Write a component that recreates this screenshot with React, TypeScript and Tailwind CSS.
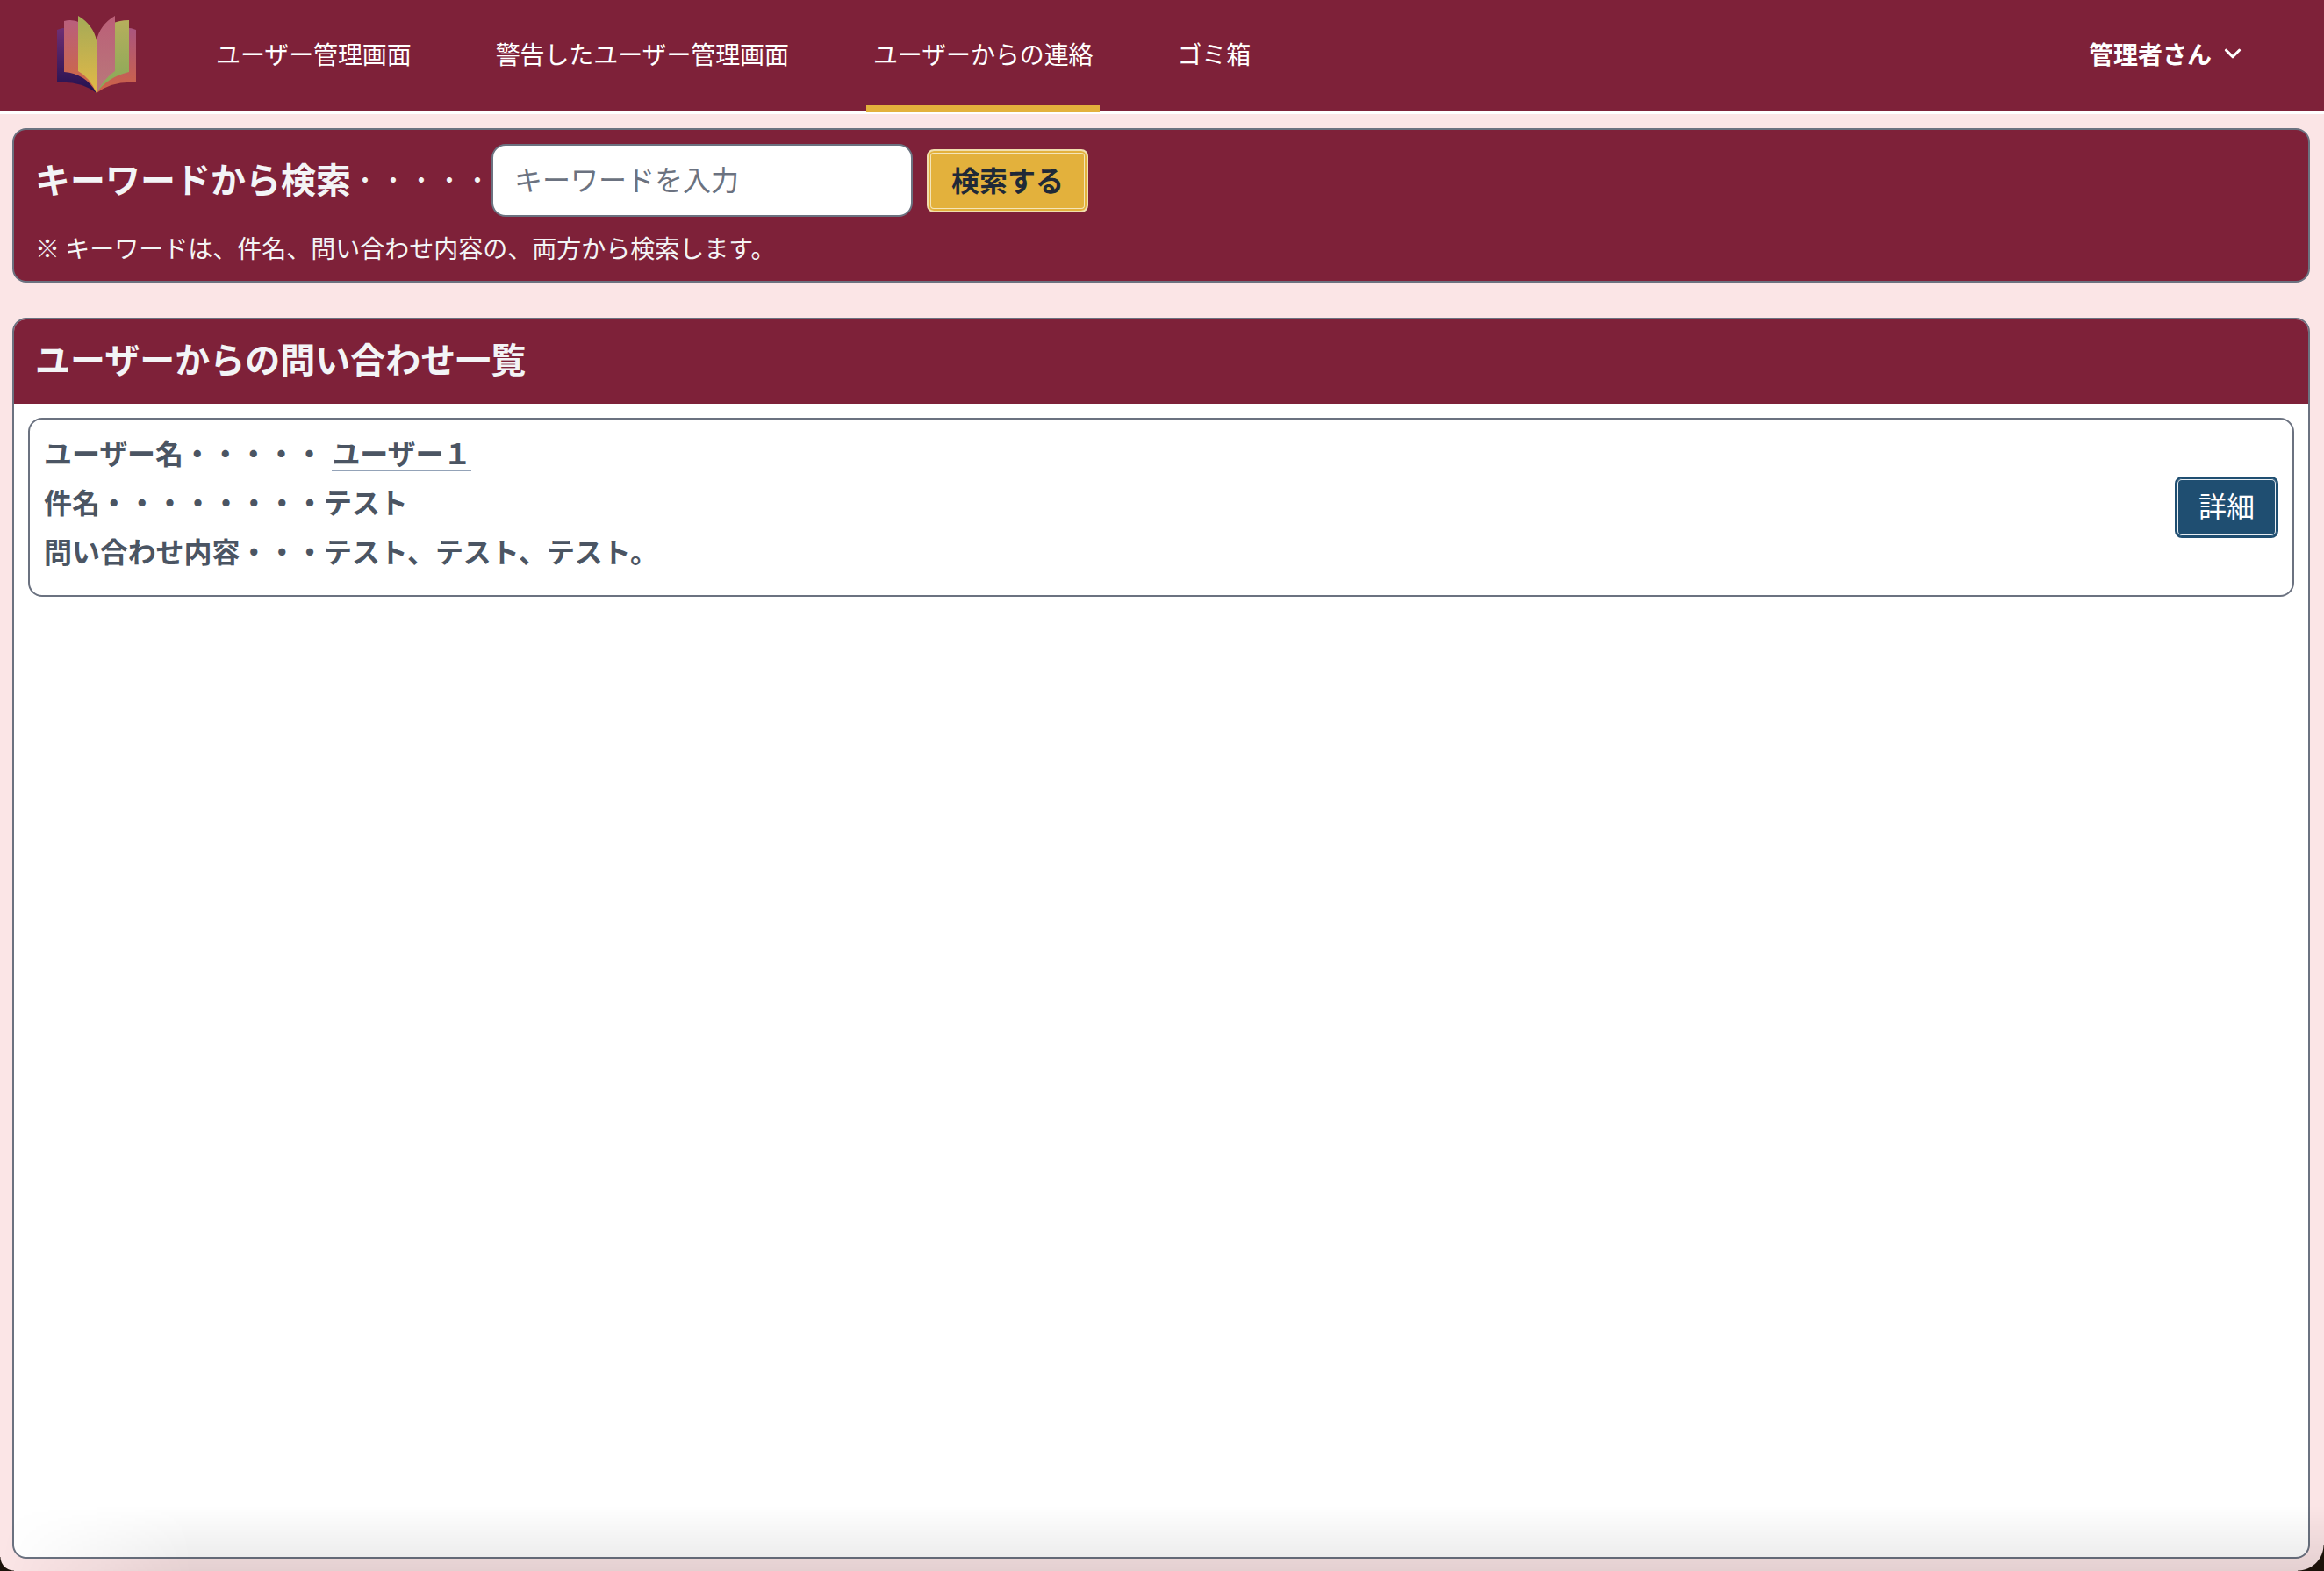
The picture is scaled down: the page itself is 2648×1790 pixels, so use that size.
import { ChevronDown } from "lucide-react";

const jp = "font-['Noto_Sans_CJK_JP','Noto_Sans',sans-serif]";

function Logo() {
  return (
    <svg width="90" height="90" viewBox="65 18 90 90" className="block">
      <defs>
        <linearGradient id="a" x1="0" y1="0" x2="0" y2="1">
          <stop offset="0" stopColor="#6f2f74" />
          <stop offset="1" stopColor="#22104f" />
        </linearGradient>
        <linearGradient id="b" x1="0" y1="0" x2="0" y2="1">
          <stop offset="0" stopColor="#a9557f" />
          <stop offset="1" stopColor="#cf6345" />
        </linearGradient>
        <linearGradient id="c" x1="0" y1="0" x2="0" y2="1">
          <stop offset="0" stopColor="#b95f7c" />
          <stop offset="1" stopColor="#d0693f" />
        </linearGradient>
        <linearGradient id="d" x1="0" y1="0" x2="0" y2="1">
          <stop offset="0" stopColor="#b6ae5c" />
          <stop offset="1" stopColor="#85a959" />
        </linearGradient>
        <linearGradient id="e" x1="0" y1="0" x2="0" y2="1">
          <stop offset="0" stopColor="#a4aa57" />
          <stop offset="1" stopColor="#e3b947" />
        </linearGradient>
        <linearGradient id="f" x1="0" y1="0" x2="0" y2="1">
          <stop offset="0" stopColor="#bb5f78" />
          <stop offset="1" stopColor="#b9797a" />
        </linearGradient>
      </defs>
      <path d="M65 34Q72 31 80 32L110 106Q92 92 65 94Z" fill="url(#a)" />
      <path d="M155 34Q148 31 140 32L110 106Q128 92 155 94Z" fill="url(#b)" />
      <path d="M73 24Q82 21 92 26L110 106Q98 84 73 82Z" fill="url(#c)" />
      <path d="M147 23Q135 23 125 28L110 106Q122 88 147 82Z" fill="url(#d)" />
      <path d="M89 18Q106 28 110 46L110 106Q102 88 89 81Z" fill="url(#e)" />
      <path d="M131 18Q114 28 110 46L110 106Q118 90 131 81Z" fill="url(#f)" />
    </svg>
  );
}

function NavItem({ label, active }: { label: string; active?: boolean }) {
  return (
    <a
      className={
        active
          ? "relative z-10 mx-[2px] flex h-[128px] items-center border-b-[8px] border-[#e3b13c] px-[8px] pt-[1px] text-[28px] font-normal tracking-[-0.1px] text-white"
          : "flex h-[128px] items-center border-b-[8px] border-transparent px-[10px] pt-[1px] text-[28px] font-normal tracking-[-0.1px] text-white"
      }
    >
      {label}
    </a>
  );
}

export default function App() {
  return (
    <div className={`relative flex h-[1790px] w-[2648px] flex-col overflow-hidden bg-[#fbe5e6] ${jp}`}>
      <header className="flex h-[130px] shrink-0 items-start border-b-4 border-white bg-[#7e2139]">
        <div className="ml-[65px] mt-[18px] h-[90px] w-[90px] shrink-0">
          <Logo />
        </div>
        <nav className="ml-[81px] flex gap-[76px]">
          <NavItem label="ユーザー管理画面" />
          <NavItem label="警告したユーザー管理画面" />
          <NavItem label="ユーザーからの連絡" active />
          <NavItem label="ゴミ箱" />
        </nav>
        <div className="ml-auto mr-[89px] flex h-[122px] items-center gap-[9px] text-[28px] font-bold text-white">
          <span>管理者さん</span>
          <ChevronDown className="h-[30px] w-[30px]" strokeWidth={2.5} />
        </div>
      </header>

      <main className="flex min-h-0 flex-1 flex-col pb-[14px] pl-[14px] pr-[16px] pt-[16px]">
        <section className="h-[176px] shrink-0 rounded-[16px] border-2 border-[#6b7280] bg-[#7e2139] pl-[24px] pt-[16px]">
          <div className="flex h-[83px] items-center">
            <span className="pb-[6px] text-[40px] font-bold text-[#f3f4f6]">キーワードから検索</span>
            <span className="pb-[6px] text-[32px] font-light text-[#f3f4f6]">・・・・・</span>
            <div className="flex h-[83px] w-[480px] items-center rounded-[16px] border-2 border-[#6b7280] bg-white pb-[6px] pl-[24px] text-[32px] font-normal text-[#6b7280]">
              キーワードを入力
            </div>
            <button className="ml-[16px] flex h-[72px] w-[184px] items-center justify-center rounded-[8px] border-2 border-[#f1dfae] bg-[#e3b13c] pb-[4px] text-[32px] font-bold text-[#1f2937] shadow-[inset_0_0_0_2px_#e3b13c,inset_0_0_0_3px_#f5e5b8]">
              検索する
            </button>
          </div>
          <p className="mt-[14px] text-[28px] font-normal leading-[42px] text-[#f3f4f6]">
            ※ キーワードは、件名、問い合わせ内容の、両方から検索します。
          </p>
        </section>

        <section className="mt-[40px] flex min-h-0 flex-1 flex-col overflow-hidden rounded-[16px] border-2 border-[#6b7280] bg-white">
          <h2 className="flex h-[96px] shrink-0 items-center bg-[#7e2139] pb-[8px] pl-[24px] text-[40px] font-bold text-[#f3f4f6]">
            ユーザーからの問い合わせ一覧
          </h2>
          <div className="px-[16px] pt-[16px]">
            <div className="flex h-[204px] items-center justify-between rounded-[16px] border-2 border-[#6b7280] pl-[16px] pr-[16px]">
              <div className="-mt-[15px] text-[32px] font-bold leading-[56px] tracking-[-0.1px] text-[#4b5563]">
                <div className="flex">
                  <span>ユーザー名・・・・・</span>
                  <a className="ml-[10px] h-[50px] border-b-2 border-[#94a3b8]">ユーザー１</a>
                </div>
                <div>件名・・・・・・・・テスト</div>
                <div>問い合わせ内容・・・テスト、テスト、テスト。</div>
              </div>
              <button className="flex h-[70px] w-[118px] items-center justify-center rounded-[8px] border-2 border-[#1f4e71] bg-[#1f4e71] pb-[6px] text-[32px] font-normal text-white shadow-[inset_0_0_0_1px_#1f4e71,inset_0_0_0_2px_#e8eef3]">
                詳細
              </button>
            </div>
          </div>
        </section>
      </main>

      <div className="pointer-events-none absolute inset-x-0 bottom-0 h-[75px] bg-gradient-to-b from-transparent to-[rgba(0,0,0,0.09)] [mask-image:linear-gradient(to_right,transparent,black_220px)]" />
      <div className="pointer-events-none absolute bottom-0 left-0 h-[16px] w-[16px] bg-[radial-gradient(circle_at_100%_0,transparent_15px,#1c120a_16px)]" />
      <div className="pointer-events-none absolute bottom-0 right-0 h-[30px] w-[30px] bg-[radial-gradient(circle_at_0_0,transparent_29px,#1c120a_30px)]" />
    </div>
  );
}
